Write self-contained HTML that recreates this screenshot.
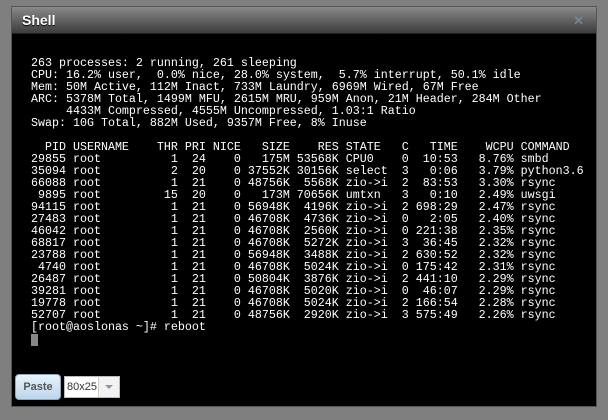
<!DOCTYPE html><html><head><style>
body{margin:0;width:608px;height:420px;background:#7f7f7f;position:relative;overflow:hidden;font-family:"Liberation Sans",sans-serif}
.win{position:absolute;left:11px;top:6px;width:586px;height:401px;background:#000;border:1px solid #555;box-sizing:border-box}
.title{position:absolute;left:0;top:0;right:0;height:26px;background:linear-gradient(#8a8a8a,#5a5a5a 60%,#3d3d3d);border-bottom:1px solid #222}
.title b{position:absolute;left:10px;top:5px;color:#fff;font-size:14px;text-shadow:0 1px 1px #000}
.x{position:absolute;right:12px;top:6px;color:#6f8599;font-size:13px;font-weight:bold}
pre{position:absolute;left:19px;top:50px;margin:0;font-family:"Liberation Mono",monospace;font-size:11.67px;line-height:12px;color:#fff}
.cur{position:absolute;left:19px;top:327px;width:7px;height:12px;background:#888}
.paste{position:absolute;left:3px;top:367px;width:46px;height:26px;border:1px solid #8ab;border-radius:4px;background:linear-gradient(#e8f2fb,#bcd5ec);box-sizing:border-box;font-size:11px;font-weight:bold;color:#555;text-align:center;line-height:24px}
.sel{position:absolute;left:52px;top:369px;width:56px;height:22px;background:#fff;border:1px solid #bbb;box-sizing:border-box;font-size:11px;color:#333;line-height:20px;padding-left:2px}
.sel i{position:absolute;right:0;top:0;width:20px;height:20px;border-left:1px solid #ccc;background:#f2f2f2}
.sel i:after{content:"";position:absolute;left:6px;top:8px;border:4px solid transparent;border-top:4px solid #8899aa}
</style></head><body>
<div class="win">
<div class="title"><b>Shell</b><span class="x">✕</span></div>
<pre>263 processes: 2 running, 261 sleeping
CPU: 16.2% user,  0.0% nice, 28.0% system,  5.7% interrupt, 50.1% idle
Mem: 50M Active, 112M Inact, 733M Laundry, 6969M Wired, 67M Free
ARC: 5378M Total, 1499M MFU, 2615M MRU, 959M Anon, 21M Header, 284M Other
     4433M Compressed, 4555M Uncompressed, 1.03:1 Ratio
Swap: 10G Total, 882M Used, 9357M Free, 8% Inuse

  PID USERNAME    THR PRI NICE   SIZE    RES STATE   C   TIME    WCPU COMMAND
29855 root          1  24    0   175M 53568K CPU0    0  10:53   8.76% smbd
35094 root          2  20    0 37552K 30156K select  3   0:06   3.79% python3.6
66088 root          1  21    0 48756K  5568K zio->i  2  83:53   3.30% rsync
 9895 root         15  20    0   173M 70656K umtxn   3   0:10   2.49% uwsgi
94115 root          1  21    0 56948K  4196K zio->i  2 698:29   2.47% rsync
27483 root          1  21    0 46708K  4736K zio->i  0   2:05   2.40% rsync
46042 root          1  21    0 46708K  2560K zio->i  0 221:38   2.35% rsync
68817 root          1  21    0 46708K  5272K zio->i  3  36:45   2.32% rsync
23788 root          1  21    0 56948K  3488K zio->i  2 630:52   2.32% rsync
 4740 root          1  21    0 46708K  5024K zio->i  0 175:42   2.31% rsync
26487 root          1  21    0 50804K  3876K zio->i  2 441:10   2.29% rsync
39281 root          1  21    0 46708K  5020K zio->i  0  46:07   2.29% rsync
19778 root          1  21    0 46708K  5024K zio->i  2 166:54   2.28% rsync
52707 root          1  21    0 48756K  2920K zio->i  3 575:49   2.26% rsync
[root@aoslonas ~]# reboot</pre>
<div class="cur"></div>
<div class="paste">Paste</div>
<div class="sel">80x25<i></i></div>
</div>
</body></html>
